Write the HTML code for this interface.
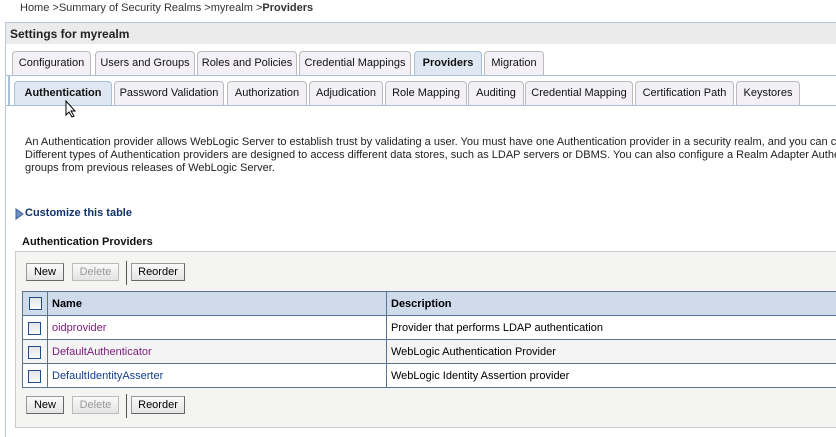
<!DOCTYPE html>
<html style="width:836px;height:437px;overflow:hidden"><head><style>
*{margin:0;padding:0;box-sizing:border-box}
body{width:836px;height:437px;overflow:hidden;background:#fff;font-family:"Liberation Sans","DejaVu Sans",sans-serif;font-size:11px;color:#000;position:relative}
.a{position:absolute;white-space:nowrap}
.crumb{left:20px;top:2px;color:#333}
.outer{left:5px;top:22px;width:831px;height:415px;border-left:1px solid #b9c9dd;border-top:1px solid #b9c9dd}
.hdr{left:6px;top:23px;width:830px;height:21px;background:#ebebeb;font-weight:bold;font-size:12px;padding:4px 0 0 4px;color:#222}
.tab{position:absolute;height:24px;border:1px solid #bbb;border-bottom:none;border-radius:4px 4px 0 0;background:#f3f1f5;padding:5px 0 0 0;text-align:center;color:#111}
.tab.on{background:#dfe8f2;border-color:#a9c0da;font-weight:bold}
.line{position:absolute;height:1px;background:#a9c0da;left:6px;width:830px}
.btn{position:absolute;height:18px;border:1px solid #999;border-right-color:#666;border-bottom-color:#666;background:linear-gradient(#fafafa,#e4e4e4);padding:2px 0 0;text-align:center;color:#000}
.btn.dis{color:#999;border-color:#bbb}
.cb{position:absolute;width:13px;height:13px;border:1px solid #1f4f86;background:linear-gradient(#e4e4e4,#fafafa)}
.tbl{position:absolute;left:22px;width:830px;border-collapse:collapse}
.tbl td{border:1px solid #5a7390;height:24px;padding:0 4px;vertical-align:middle}
</style></head><body>
<div class="a crumb">Home &gt;Summary of Security Realms &gt;myrealm &gt;<b>Providers</b></div>
<div class="a outer"></div>
<div class="a hdr">Settings for myrealm</div>

<div class="tab" style="left:12px;top:51px;width:79px">Configuration</div>
<div class="tab" style="left:95px;top:51px;width:100px">Users and Groups</div>
<div class="tab" style="left:197px;top:51px;width:100px">Roles and Policies</div>
<div class="tab" style="left:299px;top:51px;width:112px">Credential Mappings</div>
<div class="tab on" style="left:414px;top:51px;width:68px;height:25px">Providers</div>
<div class="tab" style="left:484px;top:51px;width:60px">Migration</div>
<div class="line" style="top:75px"></div>
<div class="a" style="left:8px;top:75px;width:2px;height:30px;background:#a9c0da"></div>

<div class="tab on" style="left:14px;top:81px;width:98px;height:25px">Authentication</div>
<div class="tab" style="left:114px;top:81px;width:110px">Password Validation</div>
<div class="tab" style="left:227px;top:81px;width:80px">Authorization</div>
<div class="tab" style="left:309px;top:81px;width:74px">Adjudication</div>
<div class="tab" style="left:385px;top:81px;width:82px">Role Mapping</div>
<div class="tab" style="left:468px;top:81px;width:56px">Auditing</div>
<div class="tab" style="left:525px;top:81px;width:108px">Credential Mapping</div>
<div class="tab" style="left:635px;top:81px;width:99px">Certification Path</div>
<div class="tab" style="left:736px;top:81px;width:64px">Keystores</div>
<div class="line" style="top:105px"></div>
<svg class="a" style="left:65px;top:100px" width="12" height="18"><path d="M1 1 L1 15 L4 12 L7 17 L9 16 L6 11 L10 11 Z" fill="#fff" stroke="#000" stroke-width="1"/></svg>

<div class="a" style="left:25px;top:136px;line-height:13px;color:#222">An Authentication provider allows WebLogic Server to establish trust by validating a user. You must have one Authentication provider in a security realm, and you can co<br>Different types of Authentication providers are designed to access different data stores, such as LDAP servers or DBMS. You can also configure a Realm Adapter Auther<br>groups from previous releases of WebLogic Server.</div>

<svg class="a" style="left:15px;top:208px" width="9" height="12"><path d="M1 1 L8 6 L1 11 Z" fill="#6f8fc0" stroke="#3b5c94"/></svg>
<div class="a" style="left:25px;top:207px;font-weight:bold;color:#11336b">Customize this table</div>
<div class="a" style="left:22px;top:236px;font-weight:bold;color:#111">Authentication Providers</div>

<div class="a" style="left:15px;top:251px;width:830px;height:177px;background:#f4f5f3;border:1px solid #ccc"></div>
<div class="btn" style="left:26px;top:263px;width:38px">New</div>
<div class="btn dis" style="left:72px;top:263px;width:47px">Delete</div>
<div class="a" style="left:126px;top:261px;width:1px;height:24px;background:#555"></div>
<div class="btn" style="left:131px;top:263px;width:54px">Reorder</div>

<table class="tbl" style="top:291px">
<tr style="background:#cfdbea;font-weight:bold"><td style="width:25px"></td><td style="width:339px">Name</td><td>Description</td></tr>
<tr style="background:#fff"><td></td><td style="color:#7a1a7a">oidprovider</td><td>Provider that performs LDAP authentication</td></tr>
<tr style="background:#f4f4f4"><td></td><td style="color:#7a1a7a">DefaultAuthenticator</td><td>WebLogic Authentication Provider</td></tr>
<tr style="background:#fff"><td></td><td style="color:#123e8a">DefaultIdentityAsserter</td><td>WebLogic Identity Assertion provider</td></tr>
</table>
<div class="cb" style="left:29px;top:297px"></div>
<div class="cb" style="left:28px;top:322px"></div>
<div class="cb" style="left:28px;top:346px"></div>
<div class="cb" style="left:28px;top:370px"></div>

<div class="btn" style="left:26px;top:396px;width:38px">New</div>
<div class="btn dis" style="left:72px;top:396px;width:47px">Delete</div>
<div class="a" style="left:126px;top:394px;width:1px;height:24px;background:#555"></div>
<div class="btn" style="left:131px;top:396px;width:54px">Reorder</div>
</body></html>
